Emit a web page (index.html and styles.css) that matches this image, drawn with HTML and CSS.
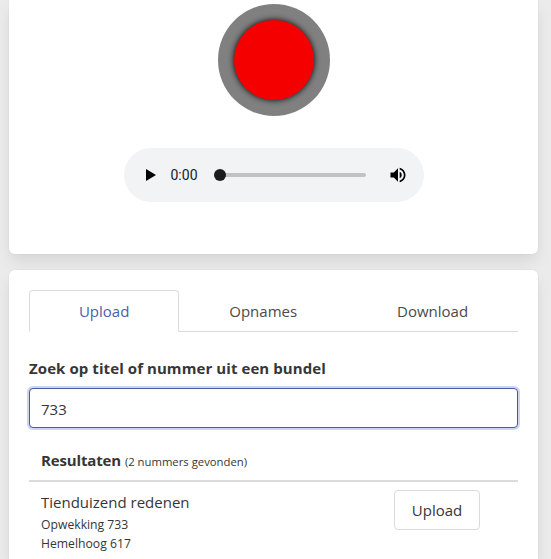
FILE: index.html
```
<!DOCTYPE html>
<html lang="nl">
<head>
  <meta charset="utf-8">
  <title>Opnames</title>
  <link rel="stylesheet" href="styles.css">
</head>
<body>
  <div class="container">
    <div class="box recorder">
      <button class="record"><span class="record-dot"></span></button>
      <div class="player">
        <svg class="play" width="24" height="24" viewBox="0 0 24 24"><path d="M8 6v12L18 12z"/></svg>
        <span class="time">0:00</span>
        <div class="timeline"><span class="thumb"></span></div>
        <svg class="volume" width="20" height="20" viewBox="0 0 24 24"><path d="M3 9v6h4l5 5V4L7 9H3zm13.5 3c0-1.77-1.02-3.29-2.5-4.03v8.05c1.48-.73 2.5-2.25 2.5-4.02zM14 3.23v2.06c2.89.86 5 3.54 5 6.71s-2.11 5.85-5 6.71v2.06c4.01-.91 7-4.49 7-8.77s-2.99-7.86-7-8.77z"/></svg>
      </div>
    </div>

    <div class="box results">
      <ul class="tabs">
        <li class="is-active"><a>Upload</a></li>
        <li><a>Opnames</a></li>
        <li><a>Download</a></li>
      </ul>
      <label class="label" for="search">Zoek op titel of nummer uit een bundel</label>
      <input id="search" class="input" type="text" value="733">
      <table class="table">
        <thead>
          <tr>
            <th colspan="2"><span class="heading">Resultaten</span> <small class="count">(2 nummers gevonden)</small></th>
          </tr>
        </thead>
        <tbody>
          <tr>
            <td>
              <p class="song">Tienduizend redenen</p>
              <p class="source">Opwekking 733</p>
              <p class="source">Hemelhoog 617</p>
            </td>
            <td class="action"><button class="button">Upload</button></td>
          </tr>
        </tbody>
      </table>
    </div>
  </div>
</body>
</html>
```
FILE: styles.css
```
* {
  box-sizing: border-box;
}

body {
  margin: 0;
  background-color: #ebebeb;
  font-family: "Open Sans", "Noto Sans", sans-serif;
  font-size: 15px;
  line-height: 24px;
  color: #363636;
}

p, ul {
  margin: 0;
  padding: 0;
}

.container {
  padding: 0 13px 0 9px;
}

.box {
  background-color: #fff;
  border-radius: 6px;
  box-shadow: 0 8px 16px -2px rgba(10, 10, 10, 0.1), 0 0 0 1px rgba(10, 10, 10, 0.02);
  padding: 20px;
}

.recorder {
  display: flex;
  flex-direction: column;
  align-items: center;
  height: 254px;
  margin-bottom: 16px;
  padding-top: 4px;
  border-radius: 0 0 6px 6px;
}

.results {
  height: 289px;
  padding-bottom: 0;
  border-radius: 6px 6px 0 0;
}

.record {
  display: flex;
  align-items: center;
  justify-content: center;
  width: 112px;
  height: 112px;
  padding: 0;
  border: none;
  border-radius: 50%;
  background-color: #808080;
}

.record-dot {
  width: 80px;
  height: 80px;
  border-radius: 50%;
  background-color: #f50000;
  box-shadow: 0 0 6px 0 #000;
}

.player {
  display: flex;
  align-items: center;
  width: 300px;
  height: 54px;
  margin-top: 32px;
  padding: 0 16px 0 14px;
  border-radius: 27px;
  background-color: #f1f3f4;
}

.time {
  margin-left: 9px;
  font-family: Roboto, sans-serif;
  font-size: 14px;
  color: #202124;
}

.timeline {
  display: flex;
  align-items: center;
  width: 147px;
  height: 4px;
  margin-left: 21px;
  border-radius: 2px;
  background-color: #c1c2c3;
}

.thumb {
  width: 12px;
  height: 12px;
  margin-left: -5px;
  border-radius: 50%;
  background-color: #1b1c1e;
}

.volume {
  margin-left: auto;
}

.tabs {
  display: flex;
  margin-bottom: 24px;
  list-style: none;
}

.tabs li {
  flex: 1 0 auto;
  height: 42px;
  padding: 9px 16px 0;
  border-bottom: 1px solid #dbdbdb;
  text-align: center;
  color: #4a4a4a;
}

.tabs .is-active {
  padding: 8px 15px 0;
  border: 1px solid #dbdbdb;
  border-bottom-color: transparent;
  border-radius: 4px 4px 0 0;
  color: #485fad;
}

.label {
  display: block;
  margin-bottom: 8px;
  font-weight: bold;
  letter-spacing: 0.08px;
}

.input {
  display: block;
  width: 100%;
  height: 40px;
  padding: 1px 11px 0;
  border: 1px solid #4a5aa8;
  border-radius: 4px;
  outline: none;
  box-shadow: 0 0 0 2px #ced5ef;
  font: inherit;
  color: #363636;
}

.table {
  width: 100%;
  margin-top: 12px;
  border-collapse: collapse;
}

.table th,
.table td {
  padding: 8px 12px;
  text-align: left;
  vertical-align: top;
}

.table th {
  border-bottom: 2px solid #dbdbdb;
}

.heading {
  letter-spacing: -0.15px;
}

.count {
  font-size: 11.3px;
  font-weight: normal;
  line-height: 1;
}

.song {
  margin-bottom: 1px;
}

.source {
  font-size: 12.2px;
  line-height: 19px;
}

.table .action {
  width: 136px;
}

.button {
  display: block;
  width: 86px;
  height: 40px;
  padding: 0;
  border: 1px solid #dbdbdb;
  border-radius: 4px;
  background-color: #fff;
  font: inherit;
  color: #363636;
}
```
